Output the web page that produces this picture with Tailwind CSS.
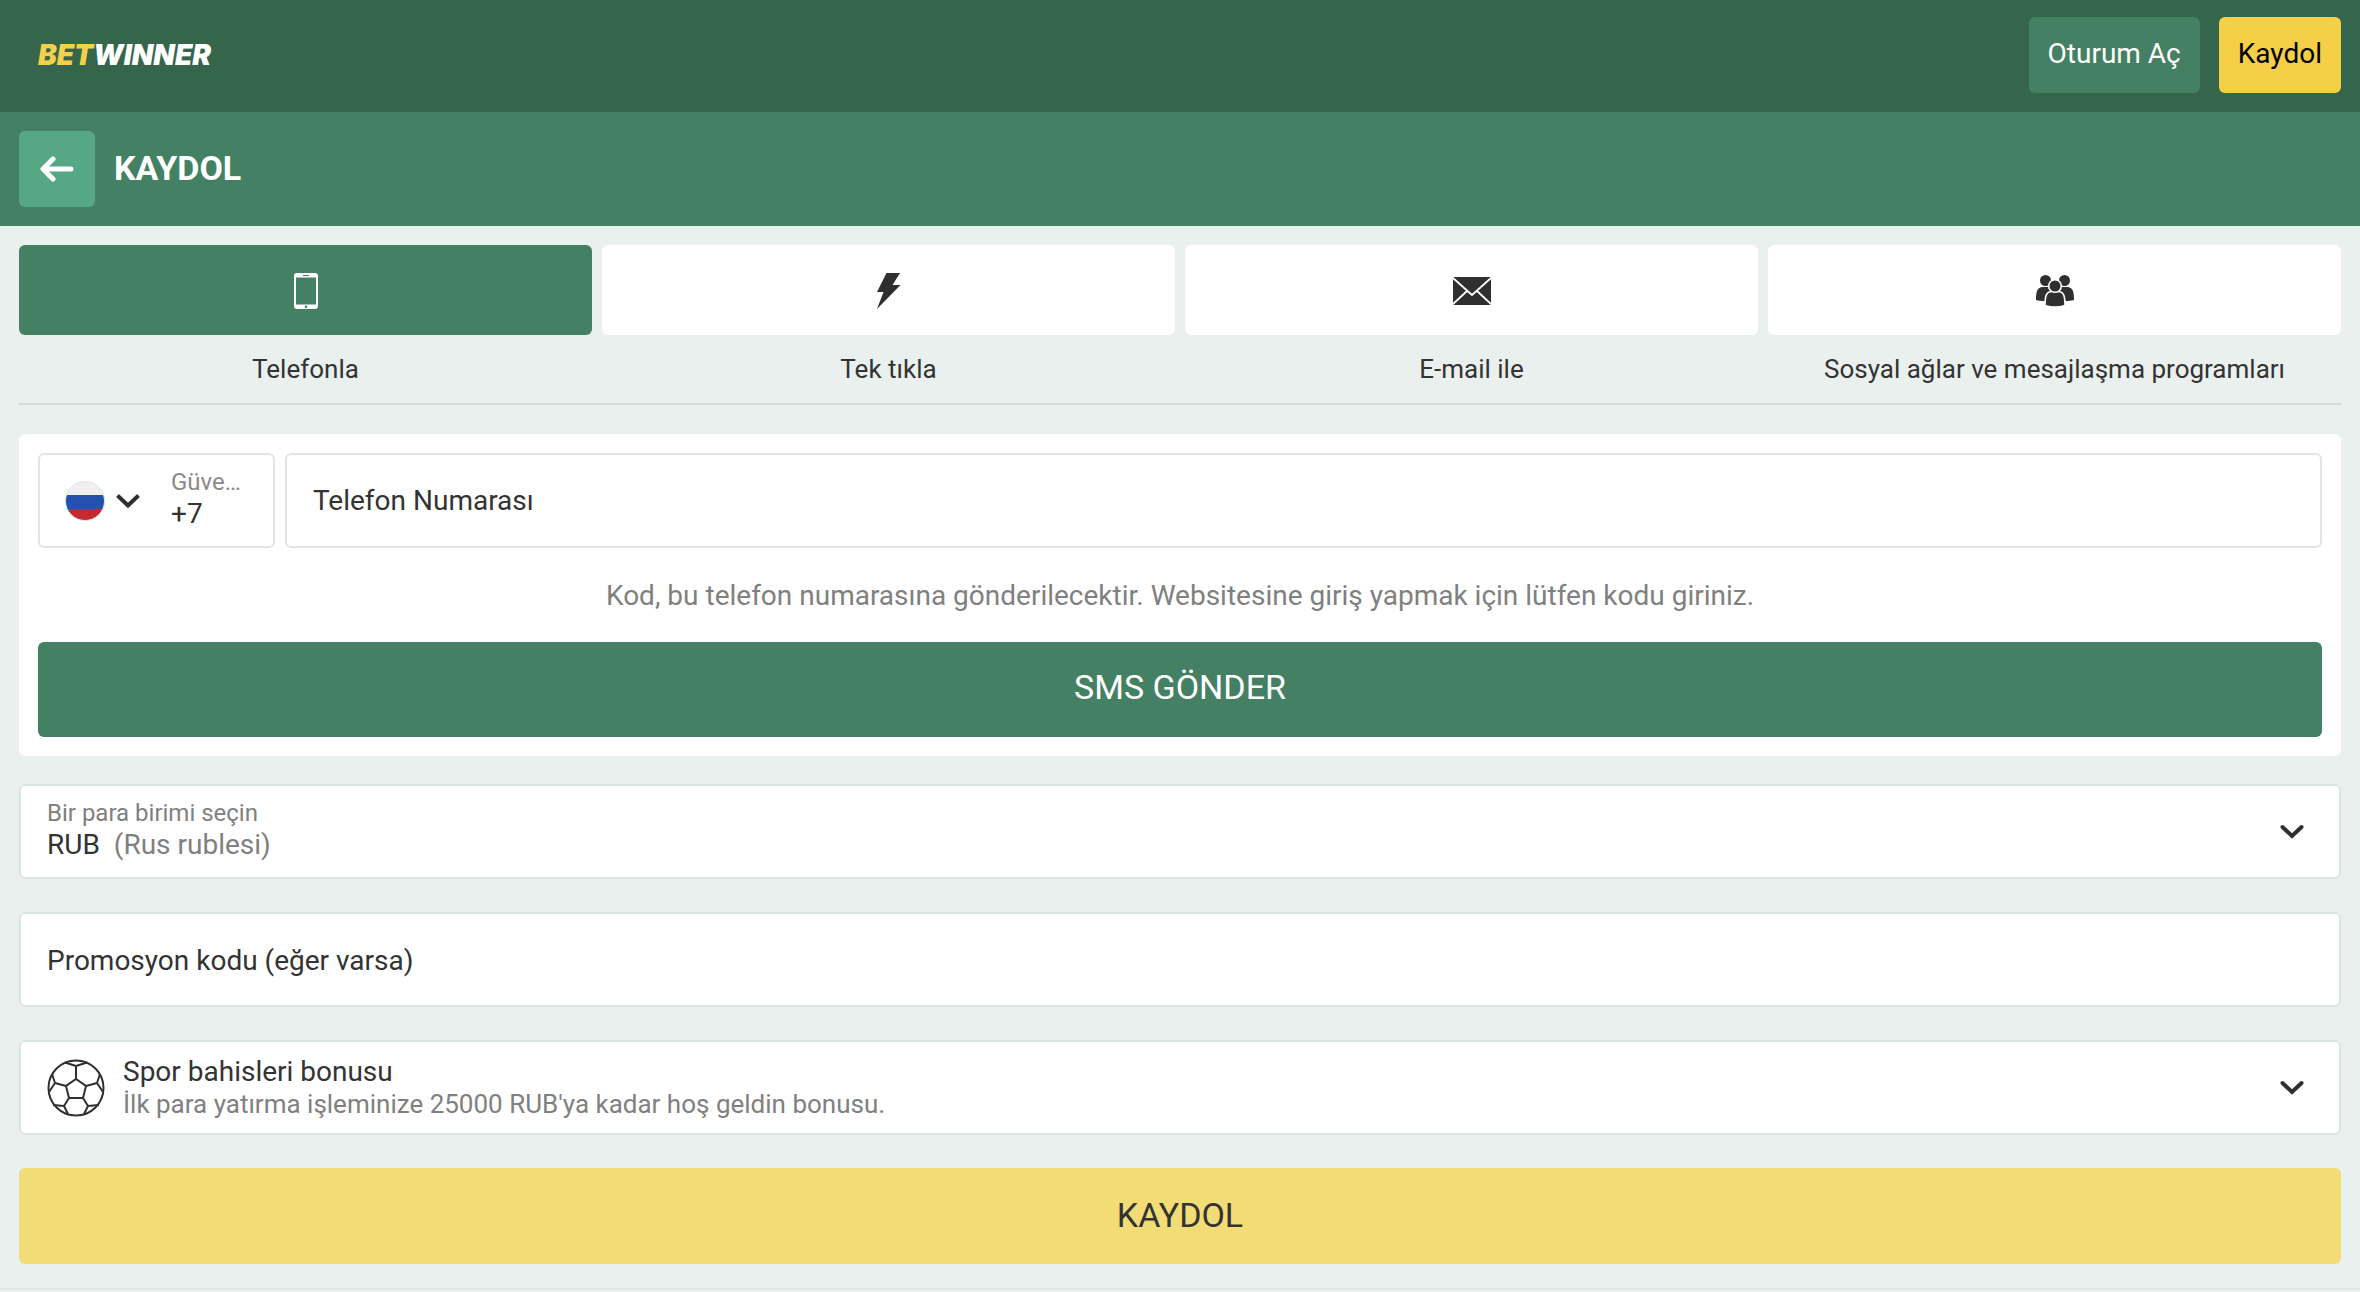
<!DOCTYPE html>
<html lang="tr">
<head>
<meta charset="utf-8">
<meta name="viewport" content="width=device-width, initial-scale=1">
<title>Kaydol</title>
<script src="https://cdn.jsdelivr.net/npm/@tailwindcss/browser@4"></script>
</head>
<body class="min-h-screen bg-[#eaf0ee] font-[Roboto,sans-serif] text-[28px] text-[#333333]">
<header class="flex h-28 items-center justify-between bg-[#35654b] pr-[19px] pl-[38px]">
  <a href="#" class="pb-[2px] font-[Inter,sans-serif] text-[28px] leading-8 font-black text-white italic" aria-label="BETWINNER"><span class="text-[#f5d04a]">BET</span>WINNER</a>
  <div class="flex gap-[19px] pb-[2px]">
    <button type="button" class="h-[76px] rounded-md bg-[#448063] px-[19px] pb-[2px] text-white">Oturum Aç</button>
    <button type="button" class="h-[76px] rounded-md bg-[#f6cf49] px-[19px] pb-[2px] text-black">Kaydol</button>
  </div>
</header>
<div class="flex h-[114px] items-center gap-[19px] bg-[#448063] px-[19px]">
  <button type="button" aria-label="Geri" class="flex size-[76px] items-center justify-center rounded-md bg-[#56a884]">
    <svg width="34" height="26" viewBox="0 0 34 26" fill="none" stroke="#fff" stroke-width="5" stroke-linecap="round" stroke-linejoin="round"><path d="M13 3 3 13l10 10M4 13h27"/></svg>
  </button>
  <h1 class="pb-[2px] text-[34px] leading-10 font-bold text-white">KAYDOL</h1>
</div>
<main class="px-[19px] pt-[19px]">
  <nav class="grid grid-cols-4 gap-[10px] border-b-2 border-[#d0dcd8] pb-4 text-center text-[26px] leading-9">
    <button type="button" class="flex flex-col gap-4">
      <span class="flex h-[90px] w-full items-center justify-center rounded-md bg-[#448063] pt-[2px]">
        <svg width="24" height="36" viewBox="0 0 24 36"><path fill="#fff" fill-rule="evenodd" d="M3 0h18a3 3 0 0 1 3 3v30a3 3 0 0 1-3 3H3a3 3 0 0 1-3-3V3a3 3 0 0 1 3-3zM2 4.500v27h20v-27zM9 2v1h6V2zM12 32.500a1.300 1.300 0 1 0 0 2.600 1.300 1.300 0 0 0 0-2.600z"/></svg>
      </span>
      <span class="w-full">Telefonla</span>
    </button>
    <button type="button" class="flex flex-col gap-4">
      <span class="flex h-[90px] w-full items-center justify-center rounded-md bg-white pt-[2px]">
        <svg width="24" height="36" viewBox="0 0 24 36" fill="#2f2f2f"><path d="M9.500 0H23L15.500 12h8L0 36 6.500 19H0z"/></svg>
      </span>
      <span class="w-full">Tek tıkla</span>
    </button>
    <button type="button" class="flex flex-col gap-4">
      <span class="flex h-[90px] w-full items-center justify-center rounded-md bg-white pt-[2px]">
        <svg width="38" height="28" viewBox="0 0 38 28"><rect width="38" height="28" rx="1.500" fill="#2f2f2f"/><path d="M0 1l19 17L38 1M0 27l14-13M38 27 24 14" fill="none" stroke="#fff" stroke-width="1.800"/></svg>
      </span>
      <span class="w-full">E-mail ile</span>
    </button>
    <button type="button" class="flex flex-col gap-4">
      <span class="flex h-[90px] w-full items-center justify-center rounded-md bg-white pt-[2px]">
        <svg width="38" height="32" viewBox="0 0 38 32" fill="#2f2f2f"><circle cx="9.500" cy="5.500" r="5.500"/><circle cx="28.500" cy="5.500" r="5.500"/><path d="M0 25c0-8 1-13 7-13h5c6 0 6 5 6 13-5 1.500-13 1.500-18 0zM38 25c0-8-1-13-7-13h-5c-6 0-6 5-6 13 5 1.500 13 1.500 18 0z"/><g stroke="#fff" stroke-width="1.600"><path d="M9 30.500c0-9 1-14 7-14h6c6 0 7 5 7 14-6 2-14 2-20 0z"/><circle cx="19" cy="11" r="6.300"/></g></svg>
      </span>
      <span class="w-full">Sosyal ağlar ve mesajlaşma programları</span>
    </button>
  </nav>
  <form>
    <section class="mt-[29px] rounded-md bg-white p-[19px]">
      <div class="flex gap-[10px]">
        <div class="flex h-[95px] w-[237px] items-center rounded-md border-2 border-[#e0e6e4] pl-[25px]">
          <button type="button" aria-label="Ülke" class="flex items-center gap-[11px]">
            <svg width="40" height="42" viewBox="0 0 40 42"><defs><clipPath id="flag"><circle cx="20" cy="21" r="19.500"/></clipPath></defs><g clip-path="url(#flag)"><path fill="#f0f0f0" d="M0 0h40v15H0z"/><path fill="#2450ae" d="M0 15h40v14H0z"/><path fill="#c8292f" d="M0 29h40v13H0z"/></g><circle cx="20" cy="21" r="19.500" fill="none" stroke="#dbe6e2"/></svg>
            <svg width="24" height="16" viewBox="0 0 24 16" fill="none" stroke="#2f2f2f" stroke-width="4"><path d="m1.500 2.500 10.500 10 10.500-10"/></svg>
          </button>
          <div class="ml-[31px] w-[76px] pb-[6px] leading-8">
            <label for="code" class="block text-[24px] text-[#8a8a8a]">Güve…</label>
            <input id="code" value="+7" class="block h-8 w-full outline-none">
          </div>
        </div>
        <input aria-label="Telefon Numarası" type="tel" placeholder="Telefon Numarası" class="h-[95px] min-w-0 flex-1 rounded-md border-2 border-[#e0e6e4] px-[26px] placeholder:text-[#333333]">
      </div>
      <p class="mt-7 mb-[26px] text-center leading-10 text-[#808080]">Kod, bu telefon numarasına gönderilecektir. Websitesine giriş yapmak için lütfen kodu giriniz.</p>
      <button type="button" class="h-[95px] w-full rounded-md bg-[#448063] pb-1 text-[34px] text-white">SMS GÖNDER</button>
    </section>
    <div class="mt-7 flex flex-col gap-[33px]">
      <button type="button" class="flex h-[95px] items-center justify-between rounded-md border-2 border-[#dbe4e1] bg-white pr-[35px] pl-[26px] text-left">
        <span class="block pb-[6px] leading-8"><span class="block text-[24px] text-[#808080]">Bir para birimi seçin</span><span class="block">RUB <span class="ml-[7px] text-[#808080]">(Rus rublesi)</span></span></span>
        <svg width="24" height="16" viewBox="0 0 24 16" fill="none" stroke="#2f2f2f" stroke-width="4" stroke-linecap="round"><path d="m2.500 3 9.500 9 9.500-9"/></svg>
      </button>
      <input aria-label="Promosyon kodu" placeholder="Promosyon kodu (eğer varsa)" class="h-[95px] rounded-md border-2 border-[#dbe4e1] bg-white px-[26px] pt-[2px] placeholder:text-[#333333]">
      <button type="button" class="flex h-[95px] items-center rounded-md border-2 border-[#dbe4e1] bg-white pr-[35px] pl-[26px] text-left">
        <svg width="58" height="58" viewBox="0 0 58 58" fill="none" stroke="#2f2f2f" stroke-width="2"><circle cx="29" cy="29" r="27.500"/><path d="m29 20 10 7-3 12H22l-3-12zM29 20V7M39 27l11-3M36 39l5 8M22 39l-5 8M19 27 8 24M29 7l-11-3.500M29 7l11-3.500M50 24l3-9M50 24l6 9M41 47l11-1M41 47l-4 8M17 47l4 8M17 47l-11-1M8 24l-3-9M8 24l-6 9"/></svg>
        <span class="ml-[18px] block flex-1 leading-8"><span class="block">Spor bahisleri bonusu</span><span class="block text-[26px] text-[#808080]">İlk para yatırma işleminize 25000 RUB'ya kadar hoş geldin bonusu.</span></span>
        <svg width="24" height="16" viewBox="0 0 24 16" fill="none" stroke="#2f2f2f" stroke-width="4" stroke-linecap="round"><path d="m2.500 3 9.500 9 9.500-9"/></svg>
      </button>
      <button type="submit" class="h-24 rounded-md bg-[#f2dc76] pb-[2px] text-[34px]">KAYDOL</button>
    </div>
  </form>
</main>
<div class="mt-6 border-t-2 border-[#dfe6e3]"></div>
</body>
</html>
